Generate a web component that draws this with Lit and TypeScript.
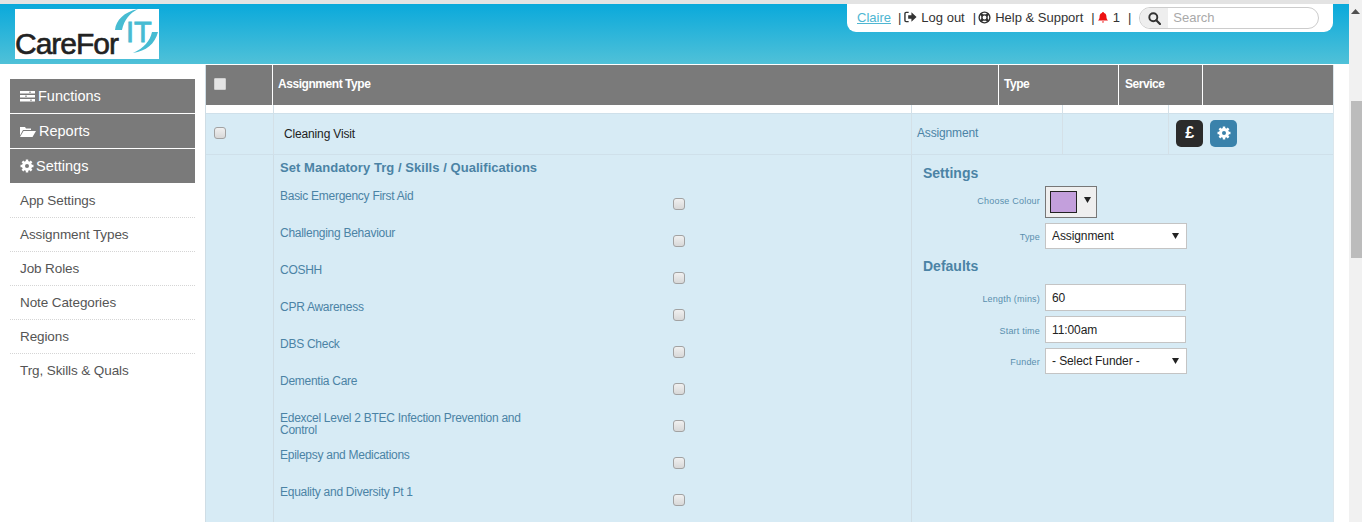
import { LitElement, html, css, svg } from "lit";
import { customElement } from "lit/decorators.js";

const gear = (size: number, color: string) => html`<svg class="ico" width=${size} height=${size} viewBox="0 0 16 16">
  <circle cx="8" cy="8" r="4.3" fill="none" stroke=${color} stroke-width="3"></circle>
  <g stroke=${color} stroke-width="2.8">
    ${[0, 45, 90, 135].map((a) => svg`<line x1="8" y1="0.6" x2="8" y2="15.4" transform="rotate(${a} 8 8)"></line>`)}
  </g>
  <circle cx="8" cy="8" r="2.3" fill="var(--hole, #7a7a7a)"></circle>
</svg>`;

const skills = [
  "Basic Emergency First Aid",
  "Challenging Behaviour",
  "COSHH",
  "CPR Awareness",
  "DBS Check",
  "Dementia Care",
  "Edexcel Level 2 BTEC Infection Prevention and Control",
  "Epilepsy and Medications",
  "Equality and Diversity Pt 1",
];
const subItems = ["App Settings", "Assignment Types", "Job Roles", "Note Categories", "Regions", "Trg, Skills & Quals"];

@customElement("app-root")
export class AppRoot extends LitElement {
  static styles = css`
    :host { display: block; width: 1362px; height: 522px; overflow: hidden; background: #fff; font-family: "Liberation Sans", Arial, sans-serif; color: #333; }
    * { box-sizing: border-box; }
    .shell { display: flex; height: 522px; }
    .page { width: 1349px; display: flex; flex-direction: column; }
    .strip { height: 4px; background: #e3e3e3; flex: none; }
    .scroll { width: 13px; background: #f1f1f1; padding-top: 4px; display: flex; flex-direction: column; }
    .scroll .up { height: 14px; display: flex; justify-content: center; align-items: center; color: #505050; }
    .scroll .thumb { margin: 83px 0 0 2px; height: 157px; background: #bcbcbc; }
    header { height: 60px; flex: none; background: linear-gradient(#0aa9db, #50c1d8); display: flex; justify-content: space-between; padding: 0 16px 0 15px; }
    .logo { margin-top: 5px; width: 144px; height: 50px; background: #fff; display: flex; align-items: flex-end; overflow: hidden; }
    .logo .care { width: 104px; flex: none; font-size: 30px; line-height: 30px; letter-spacing: -1px; color: #222; -webkit-text-stroke: 0.6px #222; white-space: nowrap; }
    .logo svg { margin: 0 0 0 -5px; align-self: flex-start; flex: none; }
    .userbar { width: 486px; height: 28px; background: #fff; border-radius: 0 0 9px 9px; display: flex; align-items: center; padding: 0 0 2px 10px; font-size: 13px; color: #333; white-space: nowrap; }
    .userbar a { color: #4eb6d2; text-decoration: underline; margin-right: 7px; }
    .userbar .sep { margin-right: 3px; }
    .userbar .sep.n { margin-right: 2px; }
    .userbar .sep.end { margin-right: 0; }
    .userbar .it { margin-right: 8px; display: flex; align-items: center; gap: 4px; }
    .userbar .it.bell { gap: 5px; }
    .search { margin-left: 8px; width: 180px; height: 22px; border: 1px solid #ccc; border-radius: 11px; display: flex; overflow: hidden; margin-top: 2px; }
    .search .b { width: 28px; background: #eee; display: flex; align-items: center; justify-content: center; flex: none; }
    .search span { padding-left: 5px; color: #a9a9a9; line-height: 20px; font-size: 13px; }
    .body { flex: 1; display: flex; min-height: 0; padding-top: 1px; }
    aside { width: 205px; flex: none; padding: 14px 10px 0; }
    .m { height: 34px; margin-bottom: 1px; background: #7a7a7a; color: #fff; display: flex; align-items: center; padding-left: 10px; gap: 3px; font-size: 14.5px; --hole: #7a7a7a; }
    .m.tight { gap: 2px; }
    .sub { margin-top: -1px; }
    .sub div { height: 34px; border-bottom: 1px dotted #d5d5d5; display: flex; align-items: center; padding: 0 0 1px 10px; font-size: 13.5px; letter-spacing: -0.1px; color: #555; }
    .sub div:first-child { height: 35px; padding: 1px 0 0 10px; }
    .sub div:last-child { border-bottom-color: transparent; }
    main { width: 1129px; border-left: 1px solid #cfdde5; border-right: 1px solid #dbe6ec; display: flex; flex-direction: column; overflow: hidden; }
    .hd { height: 40px; flex: none; background: #7a7a7a; color: #fff; display: grid; grid-template-columns: 67px 726px 120px 84px 130px; font-size: 12px; font-weight: 700; letter-spacing: -0.45px; }
    .hd > div { border-right: 1px solid #fff; display: flex; align-items: center; padding: 0 0 2px 5px; }
    .hd > div:first-child { padding-left: 8px; }
    .hd > div:nth-child(4) { padding-left: 6px; }
    .hd > div:last-child { border-right: 0; }
    .cols { display: grid; grid-template-columns: 68px 638px 151px 106px 164px; flex: none; }
    .cols > div { border-right: 1px solid #d4e0e7; }
    .cols > div:last-child { border-right: 0; }
    .gap { height: 8px; background: #fff; }
    .row { height: 42px; background: #d7ebf5; border-top: 1px solid #cfe0ea; border-bottom: 1px solid #cfe0ea; font-size: 12px; letter-spacing: -0.15px; }
    .row > div { display: flex; align-items: center; }
    .row .chk { padding-left: 8px; padding-bottom: 2px; }
    .row .name { padding-left: 10px; color: #222; }
    .row .asg { padding-left: 5px; color: #4b83a5; padding-bottom: 2px; }
    .btns { padding-left: 7px; gap: 7px; padding-bottom: 2px; }
    .btn { width: 27px; height: 27px; border-radius: 5px; display: flex; align-items: center; justify-content: center; color: #fff; font-size: 16px; font-weight: 700; }
    .btn.k { background: #2b2b2b; }
    .btn.b { background: #3a82ab; --hole: #3a82ab; }
    .detail { flex: 1; display: grid; grid-template-columns: 68px 638px 421px; background: #d7ebf5; min-height: 0; }
    .detail > div { border-right: 1px solid #cfdde5; }
    .detail > div:last-child { border-right: 0; }
    input[type="checkbox"] { appearance: none; margin: 0; width: 12px; height: 12px; border: 1px solid #a2a2a2; border-radius: 3px; background: linear-gradient(#f0f0f0, #d8d8d8); display: block; }
    .hd input { background: #e4e4e4; border-radius: 1px; border-color: #cfcfcf; }
    .mand { padding: 0 0 0 6px; overflow: hidden; }
    h3 { margin: 0; font-size: 14px; font-weight: 700; color: #4b83a5; line-height: 16px; }
    .mand h3 { margin: 5px 0 0 0; font-size: 13px; letter-spacing: 0.05px; height: 16px; }
    .skills { margin-top: 13px; display: grid; grid-auto-rows: 37px; }
    .skill { display: grid; grid-template-columns: 393px 12px; }
    .skill label { width: 248px; font-size: 12px; letter-spacing: -0.27px; line-height: 12px; color: #4b83a5; margin-top: 1px; }
    .skill input { margin-top: 9px; }
    .set { padding: 10px 0 0 11px; }
    .f { display: grid; grid-template-columns: 117px auto; column-gap: 5px; align-items: center; justify-content: start; }
    .f label { text-align: right; font-size: 9px; color: #5a8fae; letter-spacing: 0.2px; padding-top: 2px; }
    .f label.top { padding-top: 0; margin-top: -2px; }
    .pick { width: 52px; height: 32px; border: 1px solid #777; background: #efefef; display: flex; align-items: flex-start; padding: 4px 0 0 4px; gap: 7px; }
    .pick i { display: block; width: 27px; height: 22px; background: #c39fdc; border: 1px solid #222; }
    .pick svg { margin-top: 6px; }
    .sel { position: relative; width: 142px; height: 26px; }
    select { appearance: none; width: 142px; height: 26px; border: 1px solid #c4c4c4; background: #fff; font: 12px "Liberation Sans", Arial, sans-serif; letter-spacing: -0.1px; color: #222; padding: 0 0 0 6px; border-radius: 0; }
    .sel svg { position: absolute; right: 8px; top: 10px; }
    input[type="text"] { width: 141px; height: 27px; border: 1px solid #c4c4c4; background: #fff; font: 12px "Liberation Sans", Arial, sans-serif; letter-spacing: -0.1px; color: #222; padding: 0 0 0 6px; display: block; }
    .tri { flex: none; }
    .mt5 { margin-top: 5px; }
    .mt9 { margin-top: 9px; }
    .mt10 { margin-top: 10px; }
  `;

  private arrow() {
    return html`<svg class="tri" width="7" height="6" viewBox="0 0 7 6"><path d="M0 0h7L3.500 6z" fill="#222"></path></svg>`;
  }

  render() {
    return html`<div class="shell">
      <div class="page">
        <div class="strip"></div>
        <header>
          <div class="logo">
            <span class="care">CareFor</span>
            <svg width="45" height="50" viewBox="0 0 45 50">
              <path d="M1 21C2 11 10 3 24 0C16 4 10 11 8 21z" fill="#47bcd2"></path>
              <path d="M44 23C41 35 32 42 19 44C30 39 36 32 38 23z" fill="#47bcd2"></path>
              <text x="12" y="33" font-family="Liberation Sans" font-size="29" fill="#47bcd2" stroke="#47bcd2" stroke-width="0.8">IT</text>
            </svg>
          </div>
          <div class="userbar">
            <a>Claire</a>
            <span class="sep">|</span>
            <span class="it"><svg width="13" height="12" viewBox="0 0 14 12"><path d="M5 1H2.200C1.400 1 1 1.500 1 2.200v7.600c0 .7.400 1.200 1.200 1.200H5" fill="none" stroke="#333" stroke-width="1.500"></path><path d="M4.500 4H8V1l5.500 5L8 11V8H4.500z" fill="#333"></path></svg>Log out</span>
            <span class="sep n">|</span>
            <span class="it"><svg width="13" height="13" viewBox="0 0 14 14"><circle cx="7" cy="7" r="5.800" fill="none" stroke="#333" stroke-width="1.500"></circle><circle cx="7" cy="7" r="2.800" fill="none" stroke="#333" stroke-width="1.500"></circle><path d="M2.800 2.800l2.300 2.300M11.200 2.800L8.900 5.100M2.800 11.200l2.300-2.300M11.200 11.200L8.900 8.900" stroke="#333" stroke-width="2.800"></path></svg>Help &amp; Support</span>
            <span class="sep">|</span>
            <span class="it bell"><svg width="10" height="11" viewBox="0 0 10 11"><path d="M5 0a1 1 0 0 1 1 1c2 .5 2.400 2 2.400 3.600 0 2 .6 3.200 1.600 4H0c1-.8 1.600-2 1.600-4C1.600 3 2 1.500 4 1a1 1 0 0 1 1-1zM3.800 9.500h2.400L5 11z" fill="#e11"></path></svg>1</span>
            <span class="sep end">|</span>
            <div class="search">
              <div class="b"><svg width="13" height="13" viewBox="0 0 13 13"><circle cx="5.300" cy="5.300" r="4" fill="none" stroke="#333" stroke-width="1.900"></circle><path d="M8.300 8.300l3.700 3.700" stroke="#333" stroke-width="2.200" stroke-linecap="round"></path></svg></div>
              <span>Search</span>
            </div>
          </div>
        </header>
        <div class="body">
          <aside>
            <div class="m"><svg width="15" height="11" viewBox="0 0 15 11"><path d="M0 0h15v2.500H0zM0 4h15v2.500H0zM0 8h15v2.500H0z" fill="#fff"></path><path d="M10 .5v1.500M6 4.500V6M11 8.500V10" stroke="#7a7a7a" stroke-width="1.200"></path></svg>Functions</div>
            <div class="m"><svg width="16" height="11" viewBox="0 0 16 11"><path d="M0 1h5l1 1.500h5V4H3L0 9.500zM3.500 5H16l-3.500 6H0z" fill="#fff"></path></svg>Reports</div>
            <div class="m tight">${gear(14, "#fff")}Settings</div>
            <div class="sub">${subItems.map((s) => html`<div>${s}</div>`)}</div>
          </aside>
          <main>
            <div class="hd">
              <div><input type="checkbox" /></div>
              <div>Assignment Type</div>
              <div>Type</div>
              <div>Service</div>
              <div></div>
            </div>
            <div class="cols gap"><div></div><div></div><div></div><div></div><div></div></div>
            <div class="cols row">
              <div class="chk"><input type="checkbox" /></div>
              <div class="name">Cleaning Visit</div>
              <div class="asg">Assignment</div>
              <div></div>
              <div class="btns">
                <div class="btn k">£</div>
                <div class="btn b">${gear(14, "#fff")}</div>
              </div>
            </div>
            <div class="detail">
              <div></div>
              <div class="mand">
                <h3>Set Mandatory Trg / Skills / Qualifications</h3>
                <div class="skills">
                  ${skills.map((s) => html`<div class="skill"><label>${s}</label><input type="checkbox" /></div>`)}
                </div>
              </div>
              <div class="set">
                <h3>Settings</h3>
                <div class="f mt5"><label class="top">Choose Colour</label><div class="pick"><i></i>${this.arrow()}</div></div>
                <div class="f mt5"><label>Type</label><div class="sel"><select><option>Assignment</option></select>${this.arrow()}</div></div>
                <h3 class="mt9">Defaults</h3>
                <div class="f mt10"><label>Length (mins)</label><input type="text" value="60" /></div>
                <div class="f mt5"><label>Start time</label><input type="text" value="11:00am" /></div>
                <div class="f mt5"><label>Funder</label><div class="sel"><select><option>- Select Funder -</option></select>${this.arrow()}</div></div>
              </div>
            </div>
          </main>
        </div>
      </div>
      <div class="scroll">
        <div class="up"><svg width="9" height="5" viewBox="0 0 9 5"><path d="M0 5l4.500-5L9 5z" fill="#505050"></path></svg></div>
        <div class="thumb"></div>
      </div>
    </div>`;
  }
}
